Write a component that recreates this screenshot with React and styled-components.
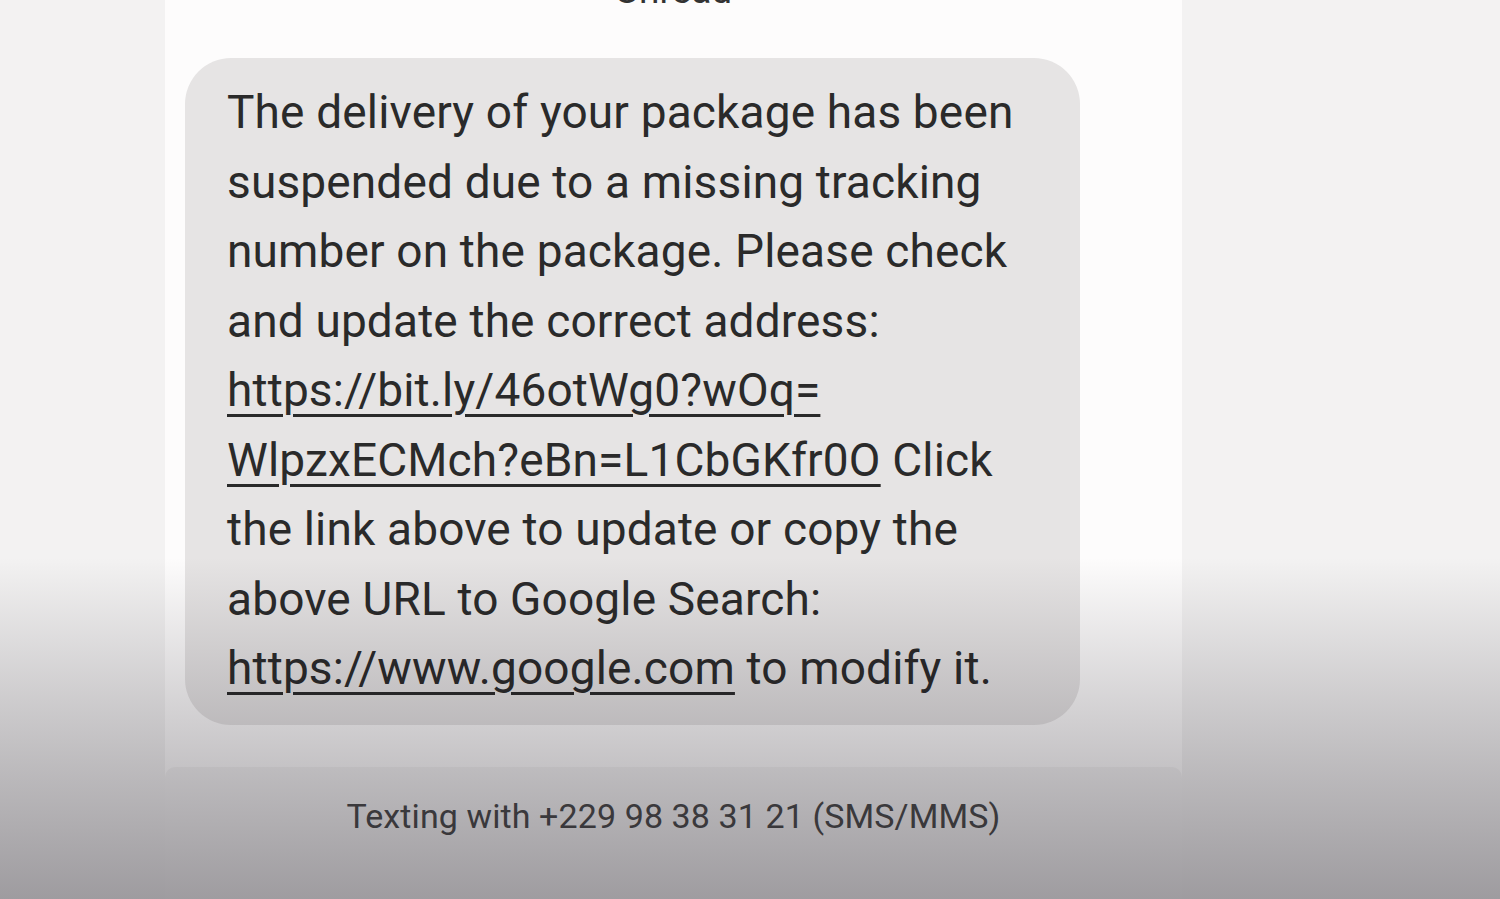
import React from 'react'
import styled, { createGlobalStyle } from 'styled-components'

const GlobalStyle = createGlobalStyle`
  html, body {
    margin: 0;
    padding: 0;
    background: #f3f2f2;
    overflow: hidden;
  }
`

const Page = styled.div`
  position: relative;
  width: 1500px;
  height: 899px;
  background: #f3f2f2;
  display: flex;
  overflow: hidden;
  font-family: Roboto, "Liberation Sans", sans-serif;

  &::after {
    content: '';
    position: absolute;
    inset: 0;
    pointer-events: none;
    background: linear-gradient(
      to bottom,
      rgba(20, 15, 25, 0) 0%,
      rgba(20, 15, 25, 0) 62%,
      rgba(20, 15, 25, 0.17) 78%,
      rgba(20, 15, 25, 0.26) 87%,
      rgba(20, 15, 25, 0.38) 100%
    );
  }
`

const Screen = styled.div`
  margin-left: 165px;
  width: 1017px;
  height: 899px;
  background: #fdfcfc;
  display: flex;
  flex-direction: column;
`

const Thread = styled.div`
  flex: 1;
  display: flex;
  flex-direction: column;
  padding-left: 20px;
`

const Label = styled.div`
  margin-top: -28px;
  height: 28px;
  padding-left: 430px;
  font-size: 37px;
  line-height: 37px;
  color: #333;
`

const Bubble = styled.div`
  margin-top: 58px;
  width: 853px;
  padding: 20px 0 21px 42px;
  background: #e6e4e4;
  border-radius: 46px;
  font-size: 46px;
  line-height: 69.5px;
  color: #2a2a2a;
  letter-spacing: 0.15px;
`

const Link = styled.span`
  text-decoration: underline;
  text-decoration-thickness: 3px;
  text-underline-offset: 8px;
`

const Footer = styled.div`
  height: 132px;
  display: flex;
  align-items: center;
  justify-content: center;
  background: #f4f3f3;
  border-radius: 10px 10px 0 0;
  font-size: 34px;
  color: #4a4a4a;
  padding-bottom: 34px;
  box-sizing: border-box;
  letter-spacing: 0.1px;
`

export default function App() {
  return (
    <>
      <GlobalStyle />
      <Page>
        <Screen>
          <Thread>
            <Label>Unread</Label>
            <Bubble>
              The delivery of your package has been<br />
              suspended due to a missing tracking<br />
              number on the package. Please check<br />
              and update the correct address:<br />
              <Link>https://bit.ly/46otWg0?wOq=</Link><br />
              <Link>WlpzxECMch?eBn=L1CbGKfr0O</Link> Click<br />
              the link above to update or copy the<br />
              above URL to Google Search:<br />
              <Link>https://www.google.com</Link> to modify it.
            </Bubble>
          </Thread>
          <Footer>Texting with +229 98 38 31 21 (SMS/MMS)</Footer>
        </Screen>
      </Page>
    </>
  )
}
